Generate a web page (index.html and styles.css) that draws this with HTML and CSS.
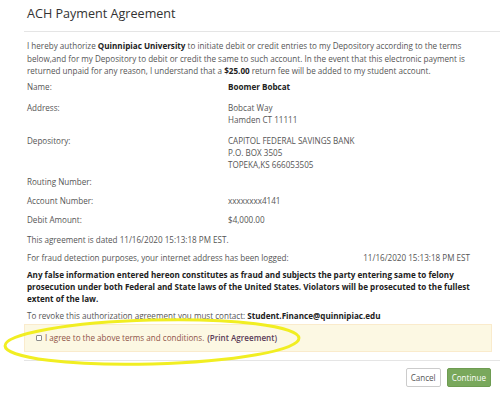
FILE: index.html
```html
<!DOCTYPE html>
<html>
<head>
<meta charset="utf-8">
<link rel="stylesheet" href="styles.css">
</head>
<body>
<div class="modal">
  <div class="modal-header"><h4 class="title">ACH Payment Agreement</h4></div>
  <div class="modal-body">
    <p class="intro">I hereby authorize <b>Quinnipiac University</b> to initiate debit or credit entries to my Depository according to the terms below,and for my Depository to debit or credit the same to such account. In the event that this electronic payment is returned unpaid for any reason, I understand that a <b>$25.00</b> return fee will be added to my student account.</p>
    <div class="row r-name"><div class="label">Name:</div><div class="val"><b>Boomer Bobcat</b></div></div>
    <div class="row r-addr"><div class="label">Address:</div><div class="val">Bobcat Way<br>Hamden CT 11111</div></div>
    <div class="row r-dep"><div class="label">Depository:</div><div class="val">CAPITOL FEDERAL SAVINGS BANK<br>P.O. BOX 3505<br>TOPEKA,KS 666053505</div></div>
    <div class="row r-route"><div class="label">Routing Number:</div><div class="val"></div></div>
    <div class="row r-acct"><div class="label">Account Number:</div><div class="val">xxxxxxxx4141</div></div>
    <div class="row r-debit"><div class="label">Debit Amount:</div><div class="val">$4,000.00</div></div>
    <p class="line dated">This agreement is dated 11/16/2020 15:13:18 PM EST.</p>
    <div class="fraud"><span>For fraud detection purposes, your internet address has been logged:</span><span class="fraud-date">11/16/2020 15:13:18 PM EST</span></div>
    <p class="warn">Any false information entered hereon constitutes as fraud and subjects the party entering same to felony prosecution under both Federal and State laws of the United States. Violators will be prosecuted to the fullest extent of the law.</p>
    <p class="line revoke">To revoke this authorization agreement you must contact: <b>Student.Finance@quinnipiac.edu</b></p>
    <div class="alert"><label class="agree"><input type="checkbox" class="check"> I agree to the above terms and conditions. <a class="print">(Print Agreement)</a></label></div>
  </div>
  <div class="modal-footer">
    <button class="btn btn-default">Cancel</button>
    <button class="btn btn-success">Continue</button>
  </div>
</div>
<svg class="highlight" width="320" height="60" viewBox="0 0 320 60"><ellipse cx="152" cy="26" rx="147" ry="22" fill="none" stroke="#f1ee22" stroke-width="3" transform="rotate(-1.5 152 26)"/></svg>
</body>
</html>
```
FILE: styles.css
```css
html, body { margin: 0; padding: 0; background: #fff; }
body {
  font-family: "Open Sans", "Segoe UI", sans-serif;
  font-size: 8.1px;
  color: #555;
  width: 500px;
  height: 394px;
  overflow: hidden;
  position: relative;
}
.modal { margin-left: 24px; width: 468px; }
.modal-header { height: 31px; border-bottom: 1px solid #e5e5e5; display: flex; align-items: center; padding-left: 3px; margin-right: -8px; }
.title { margin: 0; font-size: 12.6px; font-weight: 400; color: #333; line-height: 18px; padding-bottom: 3px; }
.modal-body { padding: 8px 0 0 3px; }
p { margin: 0; }
.intro { line-height: 12.5px; margin-bottom: 3px; }
b { color: #222; font-weight: 700; }
.row { display: flex; line-height: 12px; }
.r-name, .r-addr { margin-bottom: 9px; }
.r-dep { margin-bottom: 5px; }
.r-route, .r-acct { margin-bottom: 7px; }
.r-debit { margin-bottom: 8px; }
.label { width: 201px; }
.val { flex: 1; }
.line { line-height: 12px; }
.dated { margin-bottom: 6px; }
.fraud { display: flex; line-height: 12px; margin-bottom: 5px; }
.fraud-date { margin-left: auto; margin-right: 22px; }
.warn { font-weight: 700; color: #222; line-height: 12px; margin-bottom: 5px; }
.alert { margin-left: -3px; margin-top: 2px; background: #fcf8e3; border: 1px solid #faebcc; height: 26px; display: flex; align-items: center; padding-left: 11px; }
.agree { color: #8f5347; display: flex; align-items: center; }
.check { appearance: none; -webkit-appearance: none; width: 6px; height: 6px; border: 1px solid #8a8a8a; border-radius: 1px; background: #fff; margin: 0 3px 0 0; }
.print { color: #5a3b57; font-weight: 600; margin-left: 3px; }
.modal-footer { border-top: 1px solid #e5e5e5; margin-top: 8px; margin-right: -8px; padding: 7px 9px 0 0; display: flex; justify-content: flex-end; gap: 6px; }
.btn { font-family: inherit; font-size: 8.1px; height: 19px; border-radius: 2px; padding: 0 4px; }
.btn-default { background: #fff; border: 1px solid #ccc; color: #555; }
.btn-success { background: #79a85c; border: 1px solid #6e9c52; color: #fff; }
.highlight { position: absolute; left: 0; top: 316px; }
```
